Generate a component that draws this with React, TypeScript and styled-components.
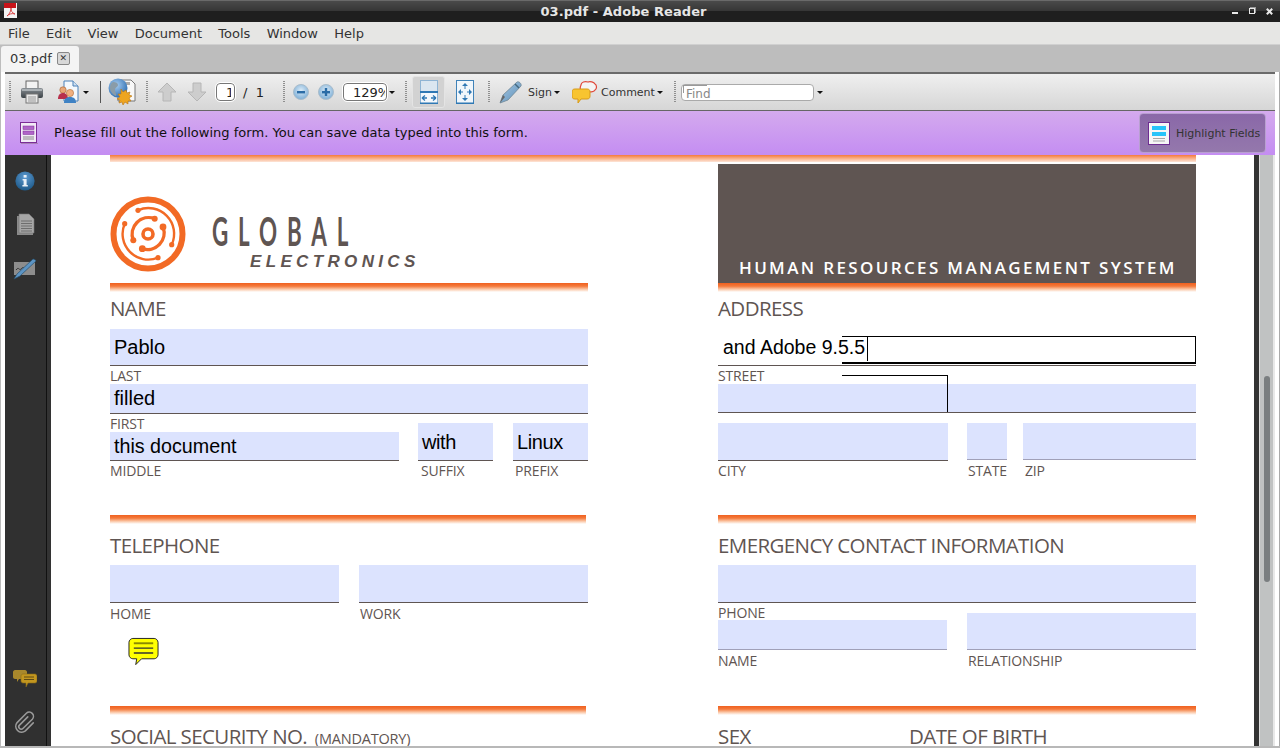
import React from "react";
import styled, { createGlobalStyle } from "styled-components";

const UI_FONT = `"DejaVu Sans", sans-serif`;
const PDF_FONT = `"Open Sans", "Noto Sans", sans-serif`;
const INK = "#5f5552";

const GlobalStyle = createGlobalStyle`
  html, body {
    margin: 0;
    height: 100%;
    overflow: hidden;
    background: #fff;
  }
  * { box-sizing: border-box; }
`;

const PrintIcon = () => (
  <svg width="24" height="24" viewBox="0 0 24 24">
    <defs>
      <linearGradient id="pr" x1="0" y1="0" x2="0" y2="1">
        <stop offset="0" stopColor="#8b9196" />
        <stop offset="1" stopColor="#3c4348" />
      </linearGradient>
    </defs>
    <rect x="6" y="1" width="12" height="8" fill="#f2f2f2" stroke="#666" />
    <rect x="1" y="8" width="22" height="10" rx="2" fill="url(#pr)" />
    <rect x="2" y="9" width="20" height="2" fill="#aab0b4" />
    <rect x="6" y="14" width="12" height="9" fill="#e8e8e8" stroke="#777" />
    <path d="M8 17h8M8 19h8M8 21h8" stroke="#999" />
  </svg>
);

const PeopleDocIcon = () => (
  <svg width="22" height="24" viewBox="0 0 22 24">
    <path d="M7 1h9l5 5v15H7z" fill="#f4f8fc" stroke="#4a80b8" />
    <path d="M16 1v5h5" fill="#cfe0f0" stroke="#4a80b8" />
    <circle cx="6" cy="10" r="3.2" fill="#e8a878" stroke="#a86030" strokeWidth=".6" />
    <path d="M1 19c0-4 2-6 5-6s5 2 5 6z" fill="#b8304c" />
    <circle cx="13" cy="13" r="3.6" fill="#f0b080" stroke="#b06a30" strokeWidth=".6" />
    <path d="M7 23c0-4 2-6 6-6s6 2 6 6z" fill="#3f82c4" />
  </svg>
);

const GlobeIcon = () => (
  <svg width="28" height="30" viewBox="0 0 28 30">
    <defs>
      <radialGradient id="gl" cx=".4" cy=".35" r=".7">
        <stop offset="0" stopColor="#a8cdf0" />
        <stop offset="1" stopColor="#2b6cb0" />
      </radialGradient>
    </defs>
    <path d="M10 3h13l4 4v17H10z" fill="#f8f8f8" stroke="#777" />
    <rect x="13" y="5" width="9" height="3" fill="#aaa" />
    <circle cx="10" cy="11" r="9.5" fill="url(#gl)" />
    <path d="M5 5c3 0 5 1 5 3s-3 2-3 5 2 4 1 6c-3-1-6-5-6-8s1-5 3-6z" fill="#8a9ca8" />
    <path d="M13 12l2 3 3-2 1 3 3-1-1 3 3 1-3 2 2 3-3 0 0 3-3-2-2 3-1-3-3 1 1-3-3-1 3-2-2-3 3 0z" fill="#eea520" stroke="#b87410" strokeWidth=".6" />
  </svg>
);

const ArrowIcon = ({ down }: { down?: boolean }) => (
  <svg width="20" height="20" viewBox="0 0 20 20">
    <path
      d={down ? "M6 1h8v9h5l-9 9-9-9h5z" : "M10 1l9 9h-5v9H6v-9H1z"}
      fill="#cdcdcd"
      stroke="#b6b6b6"
    />
  </svg>
);

const ZoomIcon = ({ plus }: { plus?: boolean }) => (
  <svg width="16" height="16" viewBox="0 0 16 16">
    <defs>
      <radialGradient id={plus ? "zp" : "zm"} cx=".5" cy=".4" r=".7">
        <stop offset="0" stopColor="#dcecf8" />
        <stop offset="1" stopColor="#6ea4d0" />
      </radialGradient>
    </defs>
    <circle cx="8" cy="8" r="7.5" fill={`url(#${plus ? "zp" : "zm"})`} stroke="#a9bccb" />
    <rect x="4" y="7" width="8" height="2.4" fill="#2b6ca6" />
    {plus && <rect x="6.8" y="4" width="2.4" height="8" fill="#2b6ca6" />}
  </svg>
);

const FitWidthIcon = () => (
  <svg width="18" height="24" viewBox="0 0 18 24">
    <rect x=".5" y=".5" width="17" height="23" fill="#f4f8fc" stroke="#8fb4d4" />
    <rect x="1" y="1" width="16" height="10" fill="#dbe6f0" />
    <rect x="0" y="11" width="18" height="2" fill="#2f78b4" />
    <rect x="0" y="22.5" width="18" height="1.5" fill="#2f78b4" />
    <path d="M2 18h5M11 18h5M2 18l3-2.5M2 18l3 2.5M16 18l-3-2.5M16 18l-3 2.5" stroke="#2f78b4" strokeWidth="1.3" fill="none" />
  </svg>
);

const FitPageIcon = () => (
  <svg width="18" height="24" viewBox="0 0 18 24">
    <rect x=".5" y=".5" width="17" height="23" fill="#f0f6fb" stroke="#3f82b8" />
    <rect x="0" y="22.5" width="18" height="1.5" fill="#2f78b4" />
    <path d="M9 3l-3 3h6zM9 21l-3-3h6zM2 12l3-3v6zM16 12l-3-3v6z" fill="#2f78b4" />
    <path d="M9 5v4M9 15v4M4 12h3M11 12h3" stroke="#2f78b4" />
  </svg>
);

const PenIcon = () => (
  <svg width="24" height="24" viewBox="0 0 24 24">
    <defs>
      <linearGradient id="penFill" x1="0" y1="0" x2="1" y2="1">
        <stop offset="0" stopColor="#a8c8e4" />
        <stop offset="1" stopColor="#5b8fb8" />
      </linearGradient>
    </defs>
    <path d="M1 23l3-8L18 2c2-1 5 2 4 4L9 20z" fill="url(#penFill)" stroke="#6f8796" strokeWidth=".8" />
    <path d="M1 23l3-8 2 2z" fill="#666" />
    <path d="M16 4l4 4" stroke="#43687f" strokeWidth="1.4" />
  </svg>
);

const CommentIcon = () => (
  <svg width="26" height="24" viewBox="0 0 26 24">
    <path d="M9 5c0-3 4-4 7-3 2-1 6 0 7 2 2 1 2 5 0 6-1 2-4 2-6 2H10C8 10 8 7 9 5z" fill="#f4f4f4" stroke="#e0483a" strokeWidth="1.2" />
    <path d="M3 9h12c2 0 3 1 3 3v4c0 2-1 3-3 3H9l-3 4v-4H3c-2 0-3-1-3-3v-4c0-2 1-3 3-3z" fill="#f8c430" stroke="#d89a18" />
  </svg>
);

const FormIcon = () => (
  <svg width="18" height="22" viewBox="0 0 18 22">
    <rect x=".5" y=".5" width="16" height="20" fill="#f2eaf6" stroke="#7b2d96" />
    <rect x="1" y="21" width="17" height="1" fill="#a880b8" />
    <rect x="3" y="4" width="11" height="3.5" fill="#b064c8" stroke="#7b2d96" strokeWidth=".5" />
    <rect x="3" y="9" width="11" height="3.5" fill="#b064c8" stroke="#7b2d96" strokeWidth=".5" />
    <path d="M3 15h11M3 17h11" stroke="#888" />
  </svg>
);

const HighlightIcon = () => (
  <svg width="22" height="23" viewBox="0 0 22 23">
    <rect x=".5" y=".5" width="21" height="22" fill="#f6f6f6" stroke="#6e2d92" />
    <rect x="4" y="4" width="14" height="4" fill="#27c4fa" />
    <rect x="4" y="10" width="14" height="4" fill="#27c4fa" />
    <path d="M5 16.5h12M5 19h12" stroke="#a8a8a8" />
  </svg>
);

const InfoIcon = () => (
  <svg width="20" height="20" viewBox="0 0 20 20">
    <defs>
      <radialGradient id="inf" cx=".5" cy=".3" r=".8">
        <stop offset="0" stopColor="#5d9ad0" />
        <stop offset="1" stopColor="#14507f" />
      </radialGradient>
    </defs>
    <circle cx="10" cy="10" r="9.6" fill="url(#inf)" />
    <rect x="8.6" y="4" width="3" height="2.6" fill="#e8f0f8" />
    <path d="M7.6 8h4v6h1.2v1.6H7.4V14h1.2V9.6h-1z" fill="#e8f0f8" />
  </svg>
);

const PagesIcon = () => (
  <svg width="19" height="23" viewBox="0 0 19 23">
    <path d="M1 3h11l5 4v15H1z" fill="#8a8a8a" />
    <path d="M3 1h10l5 5v14H3z" fill="#a6a6a6" stroke="#777" strokeWidth=".6" />
    <path d="M5 8h11M5 10.5h11M5 13h11M5 15.5h11M5 18h11" stroke="#6e6e6e" />
  </svg>
);

const SignPanelIcon = () => (
  <svg width="24" height="22" viewBox="0 0 24 22">
    <rect x="1" y="4" width="21" height="13" fill="#8d8d8d" />
    <path d="M3 12c3-4 3 1 5-1s2-2 4 0" stroke="#333" fill="none" />
    <path d="M1 21l3-5L20 1c1 0 3 1 3 2L7 18z" fill="#5c94c4" stroke="#27506e" strokeWidth=".7" />
  </svg>
);

const CommentsPanelIcon = () => (
  <svg width="24" height="19" viewBox="0 0 24 19">
    <path d="M2 1h10c1 0 2 1 2 2v5c0 1-1 2-2 2H6l-2 3v-3H2c-1 0-2-1-2-2V3c0-1 1-2 2-2z" fill="#a8882c" />
    <path d="M10 5h12c1 0 2 1 2 2v5c0 1-1 2-2 2h-7l-2 4v-4h-3c-1 0-2-1-2-2V7c0-1 1-2 2-2z" fill="#c2961f" stroke="#8c6c18" strokeWidth=".6" />
    <path d="M11 8h10M11 10.5h10" stroke="#5e4a14" />
  </svg>
);

const ClipIcon = () => (
  <svg width="22" height="23" viewBox="0 0 24 24" fill="none">
    <path
      d="M15 7L6 16a2.6 2.6 0 0 0 3.7 3.7L20 9.5a4.6 4.6 0 0 0-6.5-6.5L3.4 13.2a6.4 6.4 0 0 0 9 9L21 13.5"
      stroke="#9a9a9a"
      strokeWidth="1.7"
      strokeLinecap="round"
    />
  </svg>
);

const NoteIcon = () => (
  <svg width="31" height="30" viewBox="0 0 32 30">
    <path d="M5 1h22c2 0 4 2 4 4v13c0 2-2 4-4 4H14l-6 6 1-6H5c-2 0-4-2-4-4V5c0-2 2-4 4-4z" fill="#ffff00" stroke="#222" />
    <path d="M6 6h20" stroke="#8a8a00" strokeWidth="2" />
    <path d="M6 11h20M6 16h20" stroke="#333" strokeWidth="1.4" />
  </svg>
);

const LogoMark = () => (
  <svg width="76" height="76" viewBox="0 0 76 76" fill="none" stroke="#f26a25">
    <circle cx="38" cy="38" r="34.5" strokeWidth="6" />
    <path d="M28 14.3A25.7 25.7 0 0 1 61.7 48.7" strokeWidth="2.4" />
    <path d="M14.7 27.7A25.7 25.7 0 0 0 48 61.7" strokeWidth="2.4" />
    <path d="M44.7 22.7A16.6 16.6 0 0 0 23.3 44.3" strokeWidth="3.4" />
    <path d="M53 31A16.6 16.6 0 0 1 32.3 52.7" strokeWidth="3.4" />
    <circle cx="38" cy="38" r="5" strokeWidth="3.6" />
    <g fill="#f26a25" stroke="none">
      <circle cx="28" cy="14.3" r="2.6" />
      <circle cx="61.7" cy="48.7" r="2.6" />
      <circle cx="14.7" cy="27.7" r="2.6" />
      <circle cx="48" cy="61.7" r="2.6" />
      <circle cx="44.7" cy="22.7" r="3" />
      <circle cx="23.3" cy="44.3" r="3" />
      <circle cx="53" cy="31" r="3.4" />
      <circle cx="32.3" cy="52.7" r="3.4" />
    </g>
  </svg>
);

const PdfAppIcon = () => (
  <svg width="16" height="16" viewBox="0 0 16 16">
    <rect x="2" y="1" width="13" height="15" fill="#f4f4f4" />
    <rect x="2" y="1" width="12" height="5" fill="#c8141a" />
    <path d="M5 14c3-2 4-6 4-8 0 3 1 5 4 6-3-1-6 0-8 2z" fill="none" stroke="#d83a3a" strokeWidth=".9" />
  </svg>
);

const CloseMark = () => (
  <svg width="7" height="7" viewBox="0 0 7 7">
    <path d="M.8.8l5.4 5.4M6.2.8L.8 6.2" stroke="#e8e8e8" strokeWidth="2" />
  </svg>
);

export default function App() {
  return (
    <>
      <GlobalStyle />
      <Window>
        <TitleBar>
          <AppIconSlot>
            <PdfAppIcon />
          </AppIconSlot>
          <TitleText>03.pdf - Adobe Reader</TitleText>
          <WindowButtons>
            <MinimizeGlyph />
            <RestoreGlyph />
            <CloseMark />
          </WindowButtons>
        </TitleBar>

        <MenuBar>
          {["File", "Edit", "View", "Document", "Tools", "Window", "Help"].map((m) => (
            <MenuItem key={m}>{m}</MenuItem>
          ))}
        </MenuBar>

        <TabBar>
          <Tab>
            03.pdf
            <TabClose>✕</TabClose>
          </Tab>
        </TabBar>

        <Shell>
          <Toolbar>
            <Grip $ml={4} />
            <ToolIcon $ml={9}><PrintIcon /></ToolIcon>
            <ToolIcon $ml={13}><PeopleDocIcon /></ToolIcon>
            <Caret $ml={4} />
            <ToolSeparator $ml={11} />
            <ToolIcon $ml={7}><GlobeIcon /></ToolIcon>
            <Grip $ml={10} />
            <ToolIcon $ml={9}><ArrowIcon /></ToolIcon>
            <ToolIcon $ml={10}><ArrowIcon down /></ToolIcon>
            <SmallInput $ml={9} $w={19}>
              <InputValue $w={5}>1</InputValue>
            </SmallInput>
            <PageTotal>/&nbsp;&nbsp;1</PageTotal>
            <Grip $ml={11} />
            <ToolIcon $ml={8}><ZoomIcon /></ToolIcon>
            <ToolIcon $ml={9}><ZoomIcon plus /></ToolIcon>
            <SmallInput $ml={9} $w={44}>
              <InputValue $w={32}>129%</InputValue>
            </SmallInput>
            <Caret $ml={2} />
            <Grip $ml={10} />
            <ActiveButton><FitWidthIcon /></ActiveButton>
            <ToolIcon $ml={11}><FitPageIcon /></ToolIcon>
            <Grip $ml={14} />
            <ToolIcon $ml={9}><PenIcon /></ToolIcon>
            <ToolLabel $ml={5}>Sign</ToolLabel>
            <Caret $ml={2} />
            <ToolIcon $ml={12}><CommentIcon /></ToolIcon>
            <ToolLabel $ml={3}>Comment</ToolLabel>
            <Caret $ml={2} />
            <Grip $ml={11} />
            <FindInput>Find</FindInput>
            <Caret $ml={3} />
          </Toolbar>

          <FormBar>
            <FormBarIcon><FormIcon /></FormBarIcon>
            <FormBarText>Please fill out the following form. You can save data typed into this form.</FormBarText>
            <HighlightButton>
              <HighlightIcon />
              Highlight Fields
            </HighlightButton>
          </FormBar>

          <Workspace>
            <SidePanel>
              <SideGroup>
                <InfoIcon />
                <PagesIcon />
                <SignPanelIcon />
              </SideGroup>
              <SideGroup>
                <CommentsPanelIcon />
                <ClipIcon />
              </SideGroup>
            </SidePanel>

            <PageArea>
              <PageSheet>
                <Rule $top />
                <Columns>
                  <Column>
                    <LogoBlock>
                      <LogoMark />
                      <LogoWords>
                        <LogoGlobal>GLOBAL</LogoGlobal>
                        <LogoElectronics>ELECTRONICS</LogoElectronics>
                      </LogoWords>
                    </LogoBlock>
                    <Rule />
                    <Heading>NAME</Heading>
                    <Field $h={36}>Pablo</Field>
                    <Label>LAST</Label>
                    <Field $h={29}>filled</Field>
                    <FieldRow>
                      <Cell $w={289}>
                        <Label>FIRST</Label>
                        <Field $h={28} $size={19.7}>this document</Field>
                        <Label>MIDDLE</Label>
                      </Cell>
                      <Cell $w={75} $ml={19}>
                        <Field $h={37} $tight>with</Field>
                        <Label $indent={3}>SUFFIX</Label>
                      </Cell>
                      <Cell $w={75} $ml={20}>
                        <Field $h={37} $tight>Linux</Field>
                        <Label $indent={2}>PREFIX</Label>
                      </Cell>
                    </FieldRow>

                    <Rule $gap={36} $w={476} />
                    <Heading $tall>TELEPHONE</Heading>
                    <FieldRow>
                      <Cell $w={229}>
                        <Field $h={37} />
                        <Label $down>HOME</Label>
                      </Cell>
                      <Cell $w={229} $ml={20}>
                        <Field $h={37} />
                        <Label $down $indent={1}>WORK</Label>
                      </Cell>
                    </FieldRow>
                    <NoteSlot>
                      <NoteIcon />
                    </NoteSlot>
                    <Rule $w={476} />
                    <Heading $tall>
                      SOCIAL SECURITY NO. <HeadingNote>(MANDATORY)</HeadingNote>
                    </Heading>
                  </Column>

                  <Column>
                    <Banner>HUMAN RESOURCES MANAGEMENT SYSTEM</Banner>
                    <Rule />
                    <Heading>ADDRESS</Heading>
                    <FocusedField>
                      and Adobe 9.5.5
                      <FocusFrame />
                      <FocusCaret />
                    </FocusedField>
                    <StreetBlock>
                      <Label>STREET</Label>
                      <FocusCorner />
                      <Field $h={28} />
                    </StreetBlock>
                    <FieldRow $gap={10}>
                      <Cell $w={230}>
                        <Field $h={37} />
                        <Label>CITY</Label>
                      </Cell>
                      <Cell $w={40} $ml={19}>
                        <Field $h={36} $border="#a0a0b8" $lift />
                        <Label $indent={1}>STATE</Label>
                      </Cell>
                      <Cell $w={173} $ml={16}>
                        <Field $h={36} $border="#a0a0b8" $lift />
                        <Label $indent={2}>ZIP</Label>
                      </Cell>
                    </FieldRow>

                    <Rule $gap={36} />
                    <Heading $tall>EMERGENCY CONTACT INFORMATION</Heading>
                    <Field $h={37} />
                    <FieldRow>
                      <Cell $w={229}>
                        <Label $short>PHONE</Label>
                        <Field $h={29} $border="#a0a0b8" />
                        <Label $down>NAME</Label>
                      </Cell>
                      <Cell $w={229} $ml={20}>
                        <Field $h={36} $border="#a0a0b8" />
                        <Label $down $indent={1}>RELATIONSHIP</Label>
                      </Cell>
                    </FieldRow>
                    <Rule $gap={38} />
                    <BottomHeadings>
                      <Heading $tall $w={191}>SEX</Heading>
                      <Heading $tall>DATE OF BIRTH</Heading>
                    </BottomHeadings>
                  </Column>
                </Columns>
              </PageSheet>
              <PageEdge />
              <ScrollTrack>
                <ScrollThumb />
              </ScrollTrack>
            </PageArea>
          </Workspace>
        </Shell>
      </Window>
    </>
  );
}

const Window = styled.div`
  width: 1280px;
  height: 748px;
  display: flex;
  flex-direction: column;
  overflow: hidden;
  background: #fff;
  font-family: ${UI_FONT};
`;

const TitleBar = styled.div`
  position: relative;
  height: 22px;
  flex: none;
  display: flex;
  align-items: center;
  justify-content: center;
  padding-right: 33px;
  background: linear-gradient(#6a6a6a 0, #6a6a6a 1px, #4a4a4a 1px, #363636 11px, #1f1f1f 11px, #1f1f1f 100%);
`;

const AppIconSlot = styled.div`
  position: absolute;
  left: 2px;
  top: 2px;
  height: 16px;
`;

const TitleText = styled.div`
  color: #e6e6e6;
  font-size: 13px;
  font-weight: 700;
  letter-spacing: 0.06px;
`;

const WindowButtons = styled.div`
  position: absolute;
  right: 7px;
  top: 8px;
  display: flex;
  align-items: flex-start;
  gap: 11px;
`;

const MinimizeGlyph = styled.div`
  width: 6px;
  height: 2px;
  margin-top: 4px;
  background: #e8e8e8;
`;

const RestoreGlyph = styled.div`
  width: 6px;
  height: 6px;
  border: 1px solid #e8e8e8;
  box-shadow: 1px -1px 0 0 #999;
`;

const MenuBar = styled.div`
  height: 23px;
  flex: none;
  display: flex;
  align-items: center;
  padding-left: 8px;
  gap: 16.3px;
  background: #e6e6e4;
  border-bottom: 1px solid #d0d0d0;
`;

const MenuItem = styled.div`
  font-size: 13px;
  color: #333;
`;

const TabBar = styled.div`
  height: 27px;
  flex: none;
  display: flex;
  align-items: flex-end;
  padding-left: 1px;
  background: #bdbdbd;
`;

const Tab = styled.div`
  width: 78px;
  height: 26px;
  display: flex;
  align-items: center;
  padding: 0 0 2px 9px;
  gap: 5px;
  font-size: 13px;
  color: #333;
  background: #f4f4f4;
  border-radius: 3px 3px 0 0;
`;

const TabClose = styled.div`
  width: 13px;
  height: 13px;
  display: flex;
  align-items: center;
  justify-content: center;
  font-size: 9px;
  color: #333;
  background: #d8d8d8;
  border: 1px solid #888;
  border-radius: 2px;
`;

const Shell = styled.div`
  flex: 1;
  min-height: 0;
  display: flex;
  flex-direction: column;
  padding: 0 5px;
  background: linear-gradient(90deg, #bbb 0, #bbb 1px, #fff 1px, #fff 1279px, #aaa 1279px);
  border-bottom: 2px solid #b8b8b8;
`;

const Toolbar = styled.div`
  height: 39px;
  flex: none;
  display: flex;
  align-items: center;
  border-top: 2px solid #6a6a6a;
  border-bottom: 1px solid #666;
  background: linear-gradient(#efefef, #d6d6d6);
`;

const ToolIcon = styled.div<{ $ml: number }>`
  display: flex;
  margin-left: ${({ $ml }) => $ml}px;
`;

const Grip = styled.div<{ $ml: number }>`
  width: 2px;
  height: 22px;
  margin-left: ${({ $ml }) => $ml}px;
  background: repeating-linear-gradient(#8f8f8f 0, #8f8f8f 1px, transparent 1px, transparent 2px);
`;

const ToolSeparator = styled.div<{ $ml: number }>`
  width: 1px;
  height: 22px;
  margin-left: ${({ $ml }) => $ml}px;
  background: #555;
`;

const Caret = styled.div<{ $ml: number }>`
  width: 0;
  height: 0;
  margin-left: ${({ $ml }) => $ml}px;
  border-left: 3px solid transparent;
  border-right: 3px solid transparent;
  border-top: 3px solid #111;
`;

const SmallInput = styled.div<{ $ml: number; $w: number }>`
  width: ${({ $w }) => $w}px;
  height: 18px;
  margin-left: ${({ $ml }) => $ml}px;
  padding-left: 9px;
  display: flex;
  align-items: center;
  background: #fff;
  border: 1px solid #777;
  border-radius: 4px;
  outline: 1px solid #fff;
`;

const InputValue = styled.div<{ $w: number }>`
  width: ${({ $w }) => $w}px;
  overflow: hidden;
  flex: none;
  font-size: 13px;
  color: #222;
`;

const PageTotal = styled.div`
  margin-left: 8px;
  width: 29px;
  font-size: 13px;
  color: #222;
  white-space: nowrap;
`;

const ActiveButton = styled.div`
  width: 33px;
  height: 32px;
  margin-left: 5px;
  display: flex;
  align-items: center;
  justify-content: center;
  background: #d2d2d2;
  border: 1px solid #e4e4e4;
  border-radius: 3px;
`;

const ToolLabel = styled.div<{ $ml: number }>`
  margin-left: ${({ $ml }) => $ml}px;
  font-size: 11px;
  color: #333;
`;

const FindInput = styled.div`
  position: relative;
  width: 133px;
  height: 17px;
  margin-left: 5px;
  padding: 2px 0 0 4px;
  font-size: 12px;
  line-height: 15px;
  color: #888;
  background: #fff;
  border: 1px solid #aaa;
  border-radius: 4px;

  &::before {
    content: "";
    position: absolute;
    left: 1px;
    top: 0;
    width: 23px;
    height: 7px;
    border-top: 1px solid #999;
    border-left: 1px solid #999;
  }
`;

const FormBar = styled.div`
  height: 44px;
  flex: none;
  display: flex;
  align-items: center;
  background: linear-gradient(#d4aaee, #c48df2);
`;

const FormBarIcon = styled.div`
  display: flex;
  margin-left: 15px;
`;

const FormBarText = styled.div`
  flex: 1;
  margin-left: 16px;
  padding-bottom: 2px;
  font-size: 13px;
  letter-spacing: 0.015px;
  color: #111;
`;

const HighlightButton = styled.div`
  width: 127px;
  height: 40px;
  margin-right: 9px;
  display: flex;
  align-items: center;
  gap: 6px;
  padding-left: 8px;
  font-size: 11px;
  white-space: nowrap;
  color: #333;
  background: linear-gradient(#8a68a8, #9478ac);
  border: 1px solid #b8a0d0;
  border-radius: 4px;
`;

const Workspace = styled.div`
  flex: 1;
  min-height: 0;
  display: flex;
`;

const SidePanel = styled.div`
  width: 46px;
  flex: none;
  display: flex;
  flex-direction: column;
  justify-content: space-between;
  align-items: center;
  padding: 16px 6px 13px 0;
  background: linear-gradient(90deg, #303030 0, #303030 41px, #111 41px, #111 42px, #333 42px);
`;

const SideGroup = styled.div`
  display: flex;
  flex-direction: column;
  align-items: center;
  gap: 22px;
`;

const PageArea = styled.div`
  flex: 1;
  min-width: 0;
  display: flex;
`;

const PageSheet = styled.div`
  width: 1203px;
  flex: none;
  padding: 0 58px 0 59px;
  overflow: hidden;
  background: #fff;
`;

const PageEdge = styled.div`
  width: 5px;
  flex: none;
  background: #333;
`;

const ScrollTrack = styled.div`
  position: relative;
  flex: 1;
  background: linear-gradient(90deg, #e0e0e0 0, #e0e0e0 1px, #c0c2c2 1px, #c0c2c2 14px, #e8e8e8 14px);
`;

const ScrollThumb = styled.div`
  position: absolute;
  left: 5px;
  top: 221px;
  width: 6px;
  height: 206px;
  background: #7a7e80;
  border-radius: 3px;
`;

const Rule = styled.div<{ $top?: boolean; $gap?: number; $w?: number }>`
  height: ${({ $top }) => ($top ? 7 : 9)}px;
  flex: none;
  width: ${({ $w }) => ($w ? `${$w}px` : "100%")};
  margin-top: ${({ $gap }) => $gap ?? 0}px;
  background: ${({ $top }) =>
    $top
      ? "linear-gradient(#f57a3c, #fde6d8)"
      : "linear-gradient(#f0601f, #f47a3c 35%, #fbc8a8 70%, #fff)"};
`;

const Columns = styled.div`
  display: grid;
  grid-template-columns: 478px 478px;
  column-gap: 130px;
`;

const Column = styled.div`
  display: flex;
  flex-direction: column;
`;

const LogoBlock = styled.div`
  height: 121px;
  display: flex;
  padding-top: 34px;
`;

const LogoWords = styled.div`
  margin-left: 26px;
  display: flex;
  flex-direction: column;
`;

const LogoGlobal = styled.div`
  margin-top: 15px;
  height: 40px;
  font-family: "Lato", sans-serif;
  font-size: 40px;
  font-weight: 700;
  line-height: 40px;
  letter-spacing: 17.6px;
  white-space: nowrap;
  color: ${INK};
  transform: scaleX(0.56);
  transform-origin: left top;
`;

const LogoElectronics = styled.div`
  margin: 2px 0 0 38px;
  font-family: "Liberation Sans", sans-serif;
  font-size: 17px;
  line-height: 17px;
  font-weight: 700;
  font-style: italic;
  letter-spacing: 4.35px;
  white-space: nowrap;
  color: ${INK};
`;

const Banner = styled.div`
  height: 119px;
  margin-top: 2px;
  padding: 0 0 4px 21px;
  display: flex;
  align-items: flex-end;
  font-family: ${PDF_FONT};
  font-size: 17px;
  line-height: 22px;
  font-weight: 600;
  letter-spacing: 2.36px;
  white-space: nowrap;
  color: #fff;
  background: ${INK};
`;

const Heading = styled.div<{ $tall?: boolean; $w?: number }>`
  height: ${({ $tall }) => ($tall ? 41 : 37)}px;
  flex: none;
  ${({ $w }) => ($w ? `width: ${$w}px;` : "")}
  padding-top: ${({ $tall }) => ($tall ? 8 : 3)}px;
  font-family: ${PDF_FONT};
  font-size: 20.5px;
  line-height: 27px;
  letter-spacing: -0.6px;
  white-space: nowrap;
  color: ${INK};
`;

const HeadingNote = styled.span`
  margin-left: 3px;
  font-size: 14.5px;
  letter-spacing: -0.2px;
`;

const Label = styled.div<{ $indent?: number; $short?: boolean; $down?: boolean }>`
  height: ${({ $short }) => ($short ? 17 : 18)}px;
  padding-left: ${({ $indent }) => $indent ?? 0}px;
  padding-top: ${({ $down }) => ($down ? 1 : 0)}px;
  font-family: ${PDF_FONT};
  font-size: 14px;
  line-height: 20px;
  letter-spacing: -0.15px;
  white-space: nowrap;
  color: ${INK};
`;

const Field = styled.div<{ $h: number; $size?: number; $tight?: boolean; $border?: string; $lift?: boolean }>`
  height: ${({ $h }) => $h + 1}px;
  flex: none;
  display: flex;
  align-items: center;
  padding-left: 4px;
  padding-top: ${({ $tight }) => ($tight ? 2 : 0)}px;
  margin-bottom: ${({ $lift }) => ($lift ? 1 : 0)}px;
  font-family: "Liberation Sans", sans-serif;
  font-size: ${({ $size }) => $size ?? 20}px;
  ${({ $tight }) => ($tight ? "letter-spacing: -0.4px;" : "")}
  color: #000;
  background: #dce3fe;
  border-bottom: 1px solid ${({ $border }) => $border ?? INK};
`;

const FieldRow = styled.div<{ $gap?: number }>`
  display: flex;
  align-items: flex-end;
  margin-top: ${({ $gap }) => $gap ?? 0}px;
`;

const Cell = styled.div<{ $w: number; $ml?: number }>`
  width: ${({ $w }) => $w}px;
  flex: none;
  margin-left: ${({ $ml }) => $ml ?? 0}px;
  display: flex;
  flex-direction: column;
`;

const NoteSlot = styled.div`
  height: 85px;
  padding: 16px 0 0 18px;
`;

const FocusedField = styled.div`
  position: relative;
  height: 37px;
  flex: none;
  display: flex;
  align-items: center;
  padding-left: 5px;
  font-family: "Liberation Sans", sans-serif;
  font-size: 19.5px;
  color: #000;
  background: #fff;
  border-bottom: 1px solid ${INK};
`;

const FocusFrame = styled.div`
  position: absolute;
  left: 124px;
  top: 7px;
  width: 354px;
  height: 28px;
  border: 1px solid #000;
  border-bottom-width: 2px;
  border-left: none;
`;

const FocusCaret = styled.div`
  position: absolute;
  left: 149px;
  top: 8px;
  width: 1px;
  height: 24px;
  background: #000;
`;

const StreetBlock = styled.div`
  position: relative;
  display: flex;
  flex-direction: column;
`;

const FocusCorner = styled.div`
  position: absolute;
  left: 124px;
  top: 9px;
  width: 106px;
  height: 37px;
  border-top: 1px solid #000;
  border-right: 1px solid #000;
`;

const BottomHeadings = styled.div`
  display: flex;
`;
